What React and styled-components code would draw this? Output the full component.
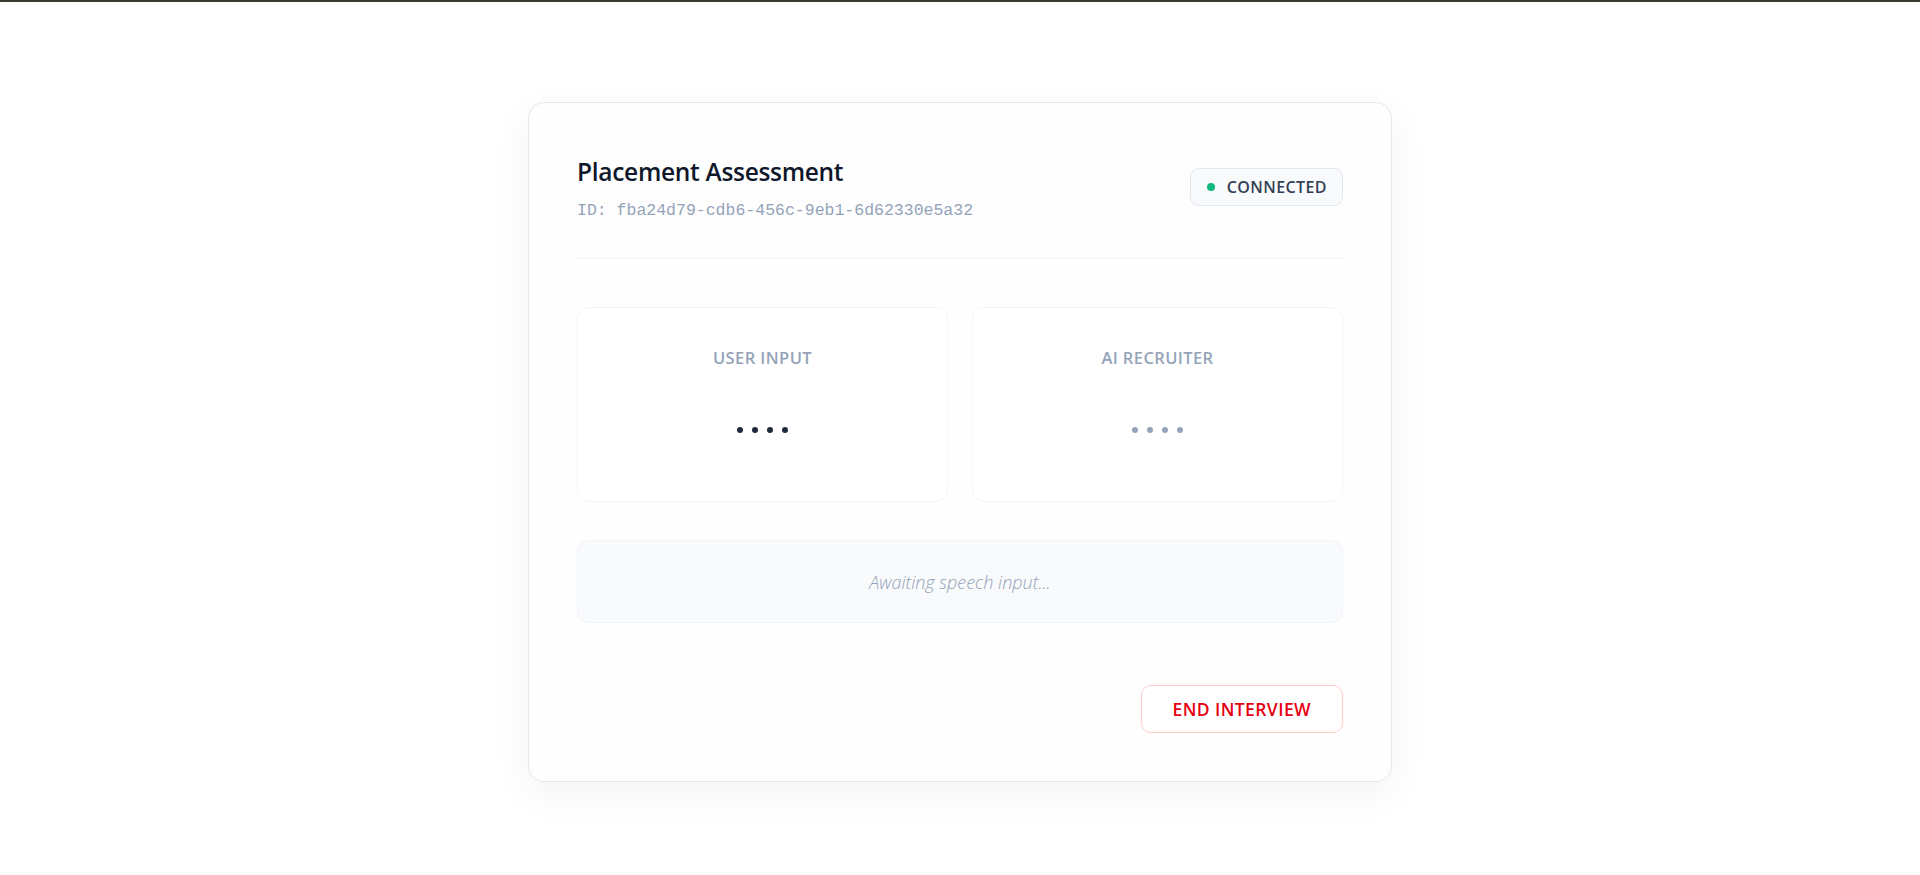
import React from "react"
import styled, { createGlobalStyle } from "styled-components"

const GlobalStyle = createGlobalStyle`
  html, body {
    margin: 0;
    padding: 0;
    background: #ffffff;
    font-family: "Open Sans", "Noto Sans", sans-serif;
  }
  * {
    box-sizing: border-box;
  }
`

const Page = styled.div`
  min-height: 875px;
  display: flex;
  flex-direction: column;
  align-items: center;
  border-top: 2px solid #383e2f;
`

const Card = styled.div`
  margin-top: 100px;
  width: 864px;
  padding: 48px;
  background: #fefeff;
  border: 1px solid #e2e8f0;
  border-radius: 16px;
  box-shadow: 0 12px 40px rgba(15, 23, 42, 0.05);
`

const Header = styled.div`
  display: flex;
  align-items: center;
  justify-content: space-between;
  padding-bottom: 35px;
  border-bottom: 1px solid #f1f5f9;
`

const TitleBlock = styled.div`
  display: flex;
  flex-direction: column;
`

const Title = styled.h1`
  margin: 0;
  font-size: 24.5px;
  line-height: 42px;
  font-weight: 600;
  color: #0f172a;
  letter-spacing: -0.3px;
`

const SessionId = styled.div`
  margin-top: 6px;
  font-family: "Liberation Mono", "DejaVu Sans Mono", monospace;
  font-size: 16.5px;
  line-height: 24px;
  color: #94a3b8;
`

const StatusPill = styled.div`
  display: flex;
  align-items: center;
  gap: 12px;
  height: 38px;
  padding: 0 15px 0 16px;
  background: #f8fafc;
  border: 1px solid #e2e8f0;
  border-radius: 9px;
  font-size: 16px;
  font-weight: 600;
  letter-spacing: 0.4px;
  color: #334155;
`

const Dot = styled.span`
  width: 8px;
  height: 8px;
  border-radius: 50%;
  background: #10b981;
`

const Panels = styled.div`
  display: grid;
  grid-template-columns: 1fr 1fr;
  gap: 24px;
  margin-top: 48px;
`

const Panel = styled.div`
  height: 195px;
  display: flex;
  flex-direction: column;
  align-items: center;
  padding-top: 37px;
  border: 1px solid #f1f5f9;
  border-radius: 12px;
  background: #ffffff;
`

const PanelLabel = styled.div`
  font-size: 16.5px;
  line-height: 26px;
  font-weight: 600;
  letter-spacing: 0.4px;
  color: #94a3b8;
`

const Dots = styled.div`
  display: flex;
  gap: 9px;
  margin-top: 56px;
`

const WaveDot = styled.span`
  width: 6px;
  height: 6px;
  border-radius: 50%;
  background: ${props => (props.active ? "#1e293b" : "#94a3b8")};
`

const Transcript = styled.div`
  margin-top: 38px;
  height: 83px;
  display: flex;
  align-items: center;
  justify-content: center;
  background: #f8fafc;
  border: 1px solid #f1f5f9;
  border-radius: 12px;
  font-size: 18px;
  font-style: italic;
  font-weight: 300;
  color: #94a3b8;
`

const Footer = styled.div`
  display: flex;
  justify-content: flex-end;
  margin-top: 62px;
`

const EndButton = styled.button`
  height: 48px;
  padding: 0 31px;
  background: #ffffff;
  border: 1px solid #fecaca;
  border-radius: 10px;
  font-family: "Open Sans", "Noto Sans", sans-serif;
  font-size: 17.5px;
  font-weight: 600;
  letter-spacing: 0.4px;
  color: #e6000f;
  cursor: pointer;
`

const panels = [
  { label: "USER INPUT", active: true },
  { label: "AI RECRUITER", active: false },
]

const App = () => {
  return (
    <>
      <GlobalStyle />
      <Page>
        <Card>
          <Header>
            <TitleBlock>
              <Title>Placement Assessment</Title>
              <SessionId>ID: fba24d79-cdb6-456c-9eb1-6d62330e5a32</SessionId>
            </TitleBlock>
            <StatusPill>
              <Dot />
              CONNECTED
            </StatusPill>
          </Header>
          <Panels>
            {panels.map((p, index) => (
              <Panel key={index}>
                <PanelLabel>{p.label}</PanelLabel>
                <Dots>
                  {[0, 1, 2, 3].map(i => (
                    <WaveDot key={i} active={p.active ? 1 : 0} />
                  ))}
                </Dots>
              </Panel>
            ))}
          </Panels>
          <Transcript>Awaiting speech input...</Transcript>
          <Footer>
            <EndButton>END INTERVIEW</EndButton>
          </Footer>
        </Card>
      </Page>
    </>
  )
}

export default App
